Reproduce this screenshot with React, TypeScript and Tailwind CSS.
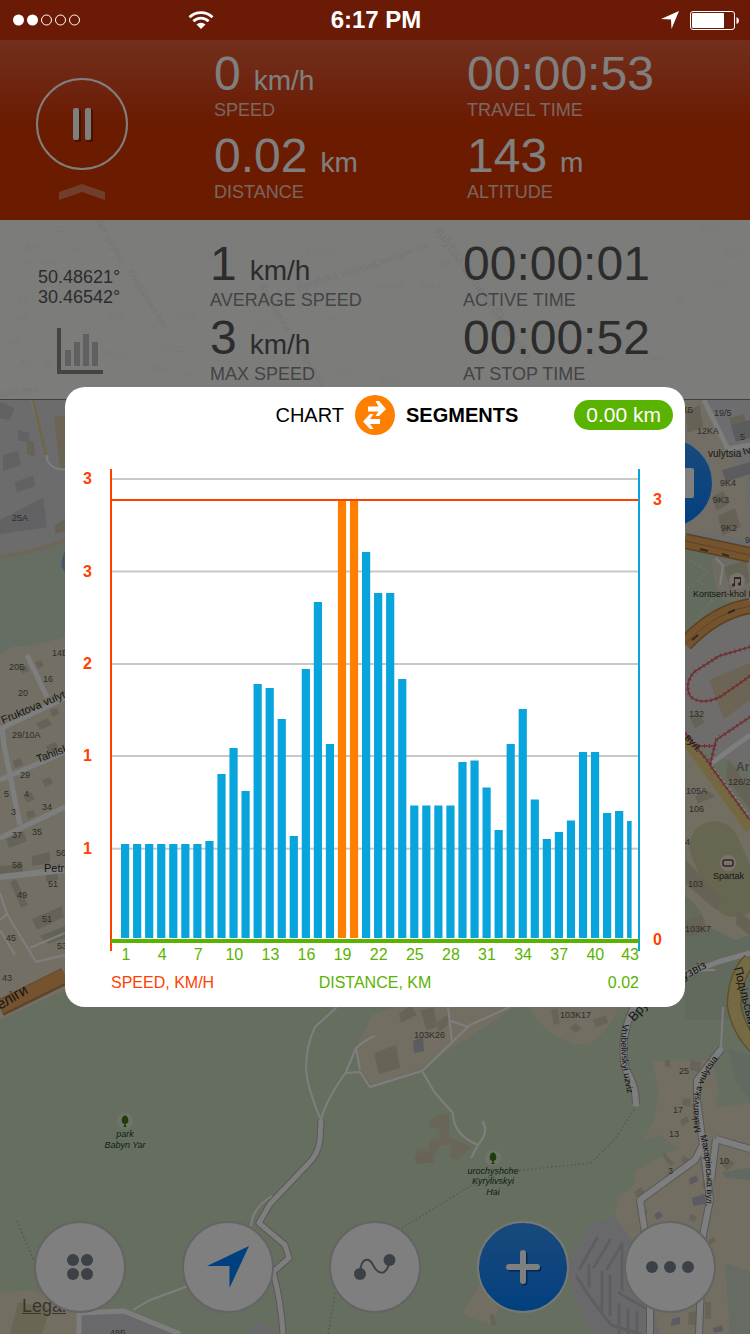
import React from "react";

type Label = [x: number, y: number, text: string, rotate?: number, size?: number];

const houseNumbers: Label[] = [
  [12, 521, "25A"], [52, 656, "14Б"], [9, 670, "20Б"], [43, 682, "16"], [18, 696, "20"],
  [12, 738, "29/10A"], [20, 778, "29"], [4, 797, "5"], [24, 797, "4"], [11, 815, "3"],
  [42, 810, "34"], [12, 838, "37"], [32, 835, "35"], [56, 856, "56"], [12, 868, "58"],
  [48, 887, "51"], [17, 898, "49"], [42, 922, "51"], [6, 941, "45"], [57, 949, "53"],
  [2, 981, "43"], [714, 416, "19/5"], [697, 434, "12KA"], [740, 440, "5"], [720, 486, "9K4"],
  [713, 503, "9K3"], [721, 531, "9K2"], [745, 543, "9"], [689, 717, "132"], [728, 785, "126/2"],
  [686, 794, "105A"], [689, 812, "106"], [685, 845, "4"], [688, 887, "103"], [685, 932, "103K7"],
  [414, 1038, "103K26"], [560, 1018, "103K17"], [679, 1074, "25"], [673, 1113, "17"],
  [669, 1137, "13"], [668, 1174, "3"], [719, 1164, "10"], [110, 1336, "48Б"], [682, 413, "КБ"],
];

const panelLabels: Label[] = [
  [55, 232, "11"], [26, 250, "8A"], [69, 252, "7A"], [24, 266, "9"], [43, 266, "8/9"],
  [18, 303, "10"], [16, 320, "9/5"], [107, 318, "32/1"], [46, 331, "7"], [8, 345, "38Г"],
  [82, 333, "32"], [20, 365, "40"], [42, 367, "38"], [103, 357, "32-31"], [163, 352, "71/13"],
  [152, 372, "69A"], [181, 377, "69"], [177, 318, "28/2"], [204, 259, "12"], [306, 255, "160/20"],
  [256, 329, "125"], [329, 322, "95"], [337, 375, "157"], [377, 288, "9K12Ф"], [420, 289, "9K1Ф"],
  [435, 267, "153"], [700, 229, "21Б"], [724, 257, "21A"], [710, 287, "15A"], [675, 304, "15"],
  [653, 321, "4"], [651, 362, "8/9"], [379, 383, "157A"],
];

const streetLabels: Label[] = [
  [3, 724, "Fruktova vulytsia", -23, 11], [38, 763, "Tahilska", -21, 11], [44, 872, "Petro", 0, 11],
  [0, 1010, "еліги", -31, 15], [708, 457, "vulytsia", 0, 10], [744, 455, "Ivana", -18, 10],
  [693, 597, "Kontsert-khol P", 0, 9], [684, 738, "вул.", 48, 11], [713, 879, "Spartak", 0, 9],
  [684, 980, "узвіз", -28, 12], [734, 968, "Подільський", 76, 12],
  [634, 1022, "Вруб", -48, 13], [95, 220, "ska vulytsia", 60, 10], [128, 272, "Бондарська вул.", 58, 9],
  [298, 291, "Syretska vulytsia", -17, 11], [258, 286, "Kyrylivska", 60, 12],
  [297, 350, "Кирилівська", 57, 10], [434, 230, "vulytsia Semena Skliarenka", 55, 13],
  [375, 267, "Сирецька вул.", -20, 9], [0, 397, "ська вул.", -8, 10],
];

const leftBuildings =
  "M0 402l14 6-4 12-10-2zM18 430l12 3-2 9-10-2zM27 438l7 5 1 14-8-3zM3 455l15-4 3 14-18 6zM15 482l18-6 2 10-18 6zM0 520l43-22 4 29-34 5-13 2zM55 525l10-6v12l-10 3zM36 723l12-5 4 7-12 5zM46 746l10-4 3 7-10 4zM13 761l7-3 3 7-8 3zM23 796l8-4 4 7-8 4zM42 780l8-3 3 6-8 4zM6 839l18-7 3 9-18 7zM32 856l18-4v11l-18 3zM0 866l23-2v9l-23 3zM10 882l6-3 12 26-7 3zM32 919l30-13 2 11-27 13zM40 936l25-10v12l-17 6zM46 873l12-3v10l-12 2zM26 812l8-2 2 6-8 3zM20 668l6-3 3 6-7 3zM35 662l6-2 3 6-6 3zM50 710l7-2 2 6-7 3z";

const rightBuildings =
  "M686 411l14-6 3 22-16 6zM729 418l15-4 6 22-15 3zM711 497l12-6 7 12-13 8zM718 516l17-8 6 19-19 9zM724 567l22-7 4 22-20 7zM695 796l12-6 8 6-17 8zM690 718l7-6 8 10-10 6zM686 860l36 38-6 12-30-26zM737 910l13 10v16l-14-12zM686 920l16-6 4 18-20 6zM728 760l22 28v22l-24-33zM689 748l8 3 2 6-8-3z";

const southBuildings =
  "M374 1053l22-8 4 23-21 6zM399 1014l12-9 6 10-16 8zM420 1010l14-3 3 20-10 3zM437 1022l12-8-2 12-9 6zM551 1010l6-2 3 15-6 2zM570 1028l6-5 6 6-7 4zM593 1020l13-5 2 8-12 4zM415 1157l16-6 3 11-18 2zM665 1060l5 0 1 8-6-2zM690 1060l12 2-3 10-9-2zM683 1098l8 1-1 8-8-2zM680 1120l7-4 2 6-7 4zM683 1155l6 4-2 6-6-4zM664 1152l10 12-4 2-8-11zM634 1192l7-5 5 7-8 5zM721 1163l6-5 8 5-8 8zM642 1208l6 3-3 5-5-3zM690 1214l7 2-2 6-6-2zM708 1240l6-3 2 5-6 3zM705 1302l6 0v17l-6 0zM689 1312l8-1v15l-9-2zM490 1315l4-1 2 11-5 1zM703 1180l7 3-3 6-5-2z";

function Labels({ items, size, className }: { items: Label[]; size: number; className?: string }) {
  return (
    <g className={className}>
      {items.map(([x, y, text, rotate = 0, own], i) => (
        <text key={i} x={x} y={y} fontSize={own ?? size} transform={`rotate(${rotate} ${x} ${y})`}>
          {text}
        </text>
      ))}
    </g>
  );
}

function Tree({ x, y }: { x: number; y: number }) {
  return (
    <g transform={`translate(${x} ${y})`}>
      <circle r="8" fill="#dfe6d6" />
      <path d="M0 -5.500c2 0 3.300 2.500 3.300 5s-1 3-2.500 3.200v2.500h1v.8h-3.600v-.8h1v-2.500C-2.300 2.500-3.300 2-3.300-.5s1.300-5 3.300-5z" fill="#3f7a14" />
    </g>
  );
}

function CityMap() {
  return (
    <svg
      className="absolute inset-0 h-full w-full"
      viewBox="0 0 750 1334"
      preserveAspectRatio="xMidYMid slice"
      fontFamily="'Liberation Sans', Arial, sans-serif"
      aria-hidden="true"
    >
      <rect width="750" height="1334" fill="#ccdcc0" />
      <path d="M0 0H750V630H0z" fill="#d9d8d8" />
      <path d="M0 220H750V400H0z" fill="#ebe4d4" />
      <path d="M0 559Q30 556 65 543V637Q45 639 35 646Q15 643 0 655z" fill="#ccdcc8" />
      <path d="M65 537Q58 552 65 558z" fill="#86b1e0" transform="translate(0 14)" />
      <path d="M0 557Q30 553 65 541" fill="none" stroke="#dccfae" strokeWidth="4" />
      <path d="M0 655Q15 643 24 647Q45 643 65 637V990L0 1020z" fill="#e6dfc8" />
      <path d="M54 417L65 415V470L60 468z" fill="#d6c6a6" />
      <path d="M685 400H712L745 470L750 540L685 530z" fill="#e4ddc8" />
      <path d="M706 400H750V465L735 460z" fill="#dad9dc" />
      <path d="M685 548L720 558Q708 575 720 590L738 602L685 640z" fill="#c5d6bc" />
      <path d="M690 560L708 572L685 590M697 580L716 595L690 630" fill="none" stroke="#e3dfb0" strokeWidth="2" strokeDasharray="3 2" />
      <path d="M712 558L750 566V605L722 600Q712 580 712 558z" fill="#dfdac6" />
      <path d="M685 645L750 606V770L685 740z" fill="#dcdad8" />
      <path d="M709 680L750 663V700L724 719z" fill="#d8c9aa" />
      <path d="M685 735L750 825V960L685 968z" fill="#e4dcc4" />
      <rect x="700" y="819" width="50" height="100" rx="25" transform="rotate(-24 725 870)" fill="#cfcda0" />
      <path d="M685 896Q700 905 706 925L735 940L750 935V1020H685z" fill="#c5d4bd" />

      <path d="M372 1015L395 1007H515L418 1070L374 1087L360 1070L356 1048z" fill="#e6dcc4" />
      <path d="M530 1007H618Q611 1030 589 1044H575Q541 1032 530 1007z" fill="#e6dcc4" />
      <path d="M652 1061L712 1060L719 1092L714 1107L750 1104V1334H625L614 1220L618 1198L634 1185L636 1170L678 1148L660 1135L644 1140L655 1118L659 1090z" fill="#e6dcc4" />
      <path d="M0 1293L28 1290L78 1305V1334H0z" fill="#e6dcc4" />
      <path d="M18 1302L50 1308L42 1334H10z" fill="#d2cfa8" />
      <path d="M480 1284L463 1314L492 1325L499 1308L510 1288z" fill="#e6dcc4" />
      <path d="M440 1115L449 1113V1137L471 1147L458 1160L450 1157L452 1145H441L430 1163L415 1161L417 1148L428 1150L431 1139L439 1140L440 1129L430 1127V1120z" fill="#d3cdaf" />
      <path d="M80 1315L124 1313L184 1334H80z" fill="#d2d2d6" />
      <path d="M252 1334V1328L262 1321L275 1334z" fill="#d2d2d6" />
      <path d="M614 1216L590 1224L568 1264L572 1292L592 1334H660L640 1250z" fill="#d3d3d8" />
      <path d="M725 1263L750 1272V1334H730z" fill="#ccd8c6" />
      <path d="M728 1048L750 1055V1100L735 1080zM722 1172L750 1168V1180L726 1178z" fill="#c5d3c3" />
      <path d={leftBuildings} fill="#cbc5b1" />
      <path d="M0 402l14 6-4 12-10-2zM18 430l12 3-2 9-10-2zM3 455l15-4 3 14-18 6zM15 482l18-6 2 10-18 6zM0 520l43-22 4 29-34 5-13 2z" fill="#c4c4c8" />
      <path d={rightBuildings} fill="#cdc5ac" />
      <path d="M722 470L750 462V474L726 482zM731 425L750 420V438L736 442z" fill="#b9b9bd" />
      <path d={southBuildings} fill="#d0c6ae" />
      <path d="M413 1041l10-4 1 14-10 2zM689 1179l8-4 1 6-8 4zM692 1198l12-4 2 10-13 2zM672 1319l8-2v7l-9 2zM654 1215l5-4 4 5-6 4zM713 1328l9-3 1 6-9 2z" fill="#b6b6c4" />

      <path
        d="M597 1238L580 1268M610 1240L594 1267M622 1244L607 1269M589 1266V1286M602 1272V1310M610 1276V1315M577 1277L589 1296L611 1325L640 1334M622 1244V1290M619 1293L645 1308M619 1305V1334M628 1310V1334M637 1313V1334"
        fill="none"
        stroke="#bdbdc0"
        strokeWidth="3"
        strokeLinecap="square"
      />

      <g fill="none" stroke="#b0b0b0" strokeLinejoin="round">
        <path d="M321 1120L320 1140Q318 1155 307 1165L270 1204L259 1223L285 1245L289 1258L273 1272Q281 1300 283 1334" strokeWidth="7" />
        <path d="M722 1048L697 1080V1100L703 1145L695 1160L640 1200L646 1240M703 1145L710 1200L703 1235L699 1334M716 1139L750 1149M716 1139L711 1180M650 1300V1334" strokeWidth="8" />
        <path d="M634 1007Q618 1040 626 1070Q636 1085 636 1104" strokeWidth="8" />
      </g>
      <g fill="none" stroke="#fdfdfd" strokeLinejoin="round">
        <path d="M321 1120L320 1140Q318 1155 307 1165L270 1204L259 1223L285 1245L289 1258L273 1272Q281 1300 283 1334" strokeWidth="5" />
        <path d="M722 1048L697 1080V1100L703 1145L695 1160L640 1200L646 1240M703 1145L710 1200L703 1235L699 1334M716 1139L750 1149M716 1139L711 1180M650 1300V1334" strokeWidth="6" />
        <path d="M634 1007Q618 1040 626 1070Q636 1085 636 1104" strokeLinecap="round" strokeWidth="6" />
        <path d="M79 1334V1313L124 1311L180 1334" strokeWidth="5" />
        <path d="M337 1007L315 1027Q306 1045 306 1070Q308 1090 321 1120Q326 1100 346 1072L356 1048Q365 1040 375 1036M346 1073L360 1072L370 1087L422 1071L470 1025L510 1007M356 1048L360 1070M448 1007L452 1042M451 1021L468 1027M422 1071L435 1093L453 1113Q453 1135 478 1145Q490 1130 482 1121M478 1145L471 1158M133 1310L150 1300L188 1286M272 1196Q252 1208 251 1226" strokeWidth="2" />
        <path d="M0 729L65 698M2 728L4 745L20 825M27 655L47 697M0 780L65 752M0 838L65 807" strokeWidth="5" />
        <path d="M0 877L65 870" strokeWidth="6" />
        <path d="M0 893L7 914L36 962L65 955M0 930L15 955M8 913L0 920M30 948L65 933M32 400L48 462Q55 471 65 469" strokeWidth="2" />
        <path d="M704 400L728 449L750 445M685 975L718 962L750 953M750 735L709 765L750 820" strokeWidth="5" />
        <path d="M716 558L723 566L720 585M723 1007L721 1048M685 971L715 970" strokeWidth="2" />
      </g>
      <path d="M33 400L46 455" stroke="#dccf93" strokeWidth="3" />
      <g fill="none">
        <path d="M0 1008L65 976" stroke="#b98a50" strokeWidth="17" />
        <path d="M0 1007L65 975" stroke="#e8a65c" strokeWidth="14" />
        <path d="M685 541L750 555M685 644Q715 612 750 606" stroke="#b9833f" strokeWidth="16" />
        <path d="M685 541L750 555M685 644Q715 612 750 606" stroke="#e8a65c" strokeWidth="13" />
        <path d="M685 541L750 555M685 644Q715 612 750 606" stroke="#b58a4b" strokeWidth="1" />
        <path d="M685 739L712 776L750 829" stroke="#e6d084" strokeWidth="10" />
        <path d="M750 960Q735 975 734 1005Q738 1030 756 1048" stroke="#b9a253" strokeWidth="15" />
        <path d="M750 960Q735 975 734 1005Q738 1030 756 1048" stroke="#ead587" strokeWidth="12" />
        <path d="M700 549l8 2m14 3l7 2M692 640l6-5m30-22l7-3" stroke="#665533" strokeWidth="2" />
        <path d="M750 647L719 656L694 672Q684 684 690 696Q700 706 720 697L750 676M750 717L716 740L710 765L750 820M685 733L711 765M694 746H716" stroke="#e05c66" strokeWidth="1.500" />
        <path d="M750 647L719 656L694 672Q684 684 690 696Q700 706 720 697L750 676M750 717L716 740L710 765L750 820M685 733L711 765M694 746H716" stroke="#e05c66" strokeWidth="4" strokeDasharray="1 4" />
        <path d="M402 1228L480 1180L505 1172L591 1163L614 1140L636 1107M17 1221L34 1261M335 1293L328 1334" stroke="#abb398" strokeWidth="1.500" strokeDasharray="1.500 2.500" />
        <path d="M0 382L80 375L130 350L240 300L400 220M80 220L180 350L230 400M200 220L260 290L350 400M420 220L560 400M0 260L90 330L200 400M620 220L720 400M520 330L750 260" stroke="#f6dfb4" strokeWidth="7" opacity="0.6" />
      </g>

      <path id="vrubel" d="M623 1024Q617 1052 630 1104" fill="none" />
      <path id="makar" d="M701 1132Q690 1088 724 1052" fill="none" />
      <path id="makar2" d="M700 1136Q710 1170 705 1222" fill="none" />
      <g fill="#282828" fontSize="9">
        <text><textPath href="#vrubel">Vrubelivskyi uzviz</textPath></text>
        <text><textPath href="#makar">Makarivska vulytsia</textPath></text>
        <text><textPath href="#makar2">Макарівська вул.</textPath></text>
      </g>
      <Labels items={houseNumbers} size={9} className="fill-[#5c5a56]" />
      <Labels items={panelLabels} size={9} className="fill-[#8a8780]" />
      <Labels items={streetLabels} size={11} className="fill-[#303030]" />
      <text x="736" y="771" fontSize="12" fontWeight="bold" fill="#8d8a84">Ar</text>

      <circle cx="737" cy="581" r="8" fill="#eee9de" />
      <g fill="#6b4a35">
        <path d="M734 577H741V579H734z" />
        <path d="M734 577H735V585H734zM740 577H741V584H740z" />
        <circle cx="733.500" cy="585" r="1.700" />
        <circle cx="739.500" cy="584" r="1.700" />
      </g>
      <circle cx="728" cy="863" r="8" fill="#eee9de" />
      <rect x="723" y="860" width="10" height="6" rx="2" fill="none" stroke="#6b4a35" strokeWidth="1.500" />

      <Tree x={125} y={1121} />
      <Tree x={493} y={1158} />
      <g fill="#23402b" fontSize="9" fontStyle="italic" textAnchor="middle">
        <text x="125" y="1137">park</text>
        <text x="125" y="1148">Babyn Yar</text>
        <text x="493" y="1174">urochyshche</text>
        <text x="493" y="1184">Kyrylivskyi</text>
        <text x="493" y="1195">Hai</text>
      </g>
    </svg>
  );
}

function StatusBar() {
  return (
    <div className="relative z-30 grid h-10 grid-cols-[1fr_auto_1fr] items-center bg-[#6b1a05] pr-[10px] pl-3 text-white">
      <div className="flex items-center justify-between pr-[117px]">
        <svg className="h-3 w-[70px]" viewBox="0 0 70 12" fill="none" stroke="white" aria-label="Signal">
          <circle cx="6.500" cy="6" r="5.500" fill="white" stroke="none" />
          <circle cx="20.500" cy="6" r="5.500" fill="white" stroke="none" />
          <circle cx="34.500" cy="6" r="5" />
          <circle cx="48.500" cy="6" r="5" />
          <circle cx="62.500" cy="6" r="5" />
        </svg>
        <svg className="h-[18px] w-[26px]" viewBox="0 0 26 18" fill="none" stroke="white" strokeWidth="2.800" aria-label="Wi-Fi">
          <path d="M1.500 6.300A16.500 16.500 0 0 1 24.500 6.300" />
          <path d="M5.400 10.300A10.800 10.800 0 0 1 20.600 10.300" />
          <path d="M13 18L8.500 13.500A6.500 6.500 0 0 1 17.500 13.500z" fill="white" stroke="none" />
        </svg>
      </div>
      <div className="text-2xl leading-10 font-bold">6:17 PM</div>
      <div className="flex items-center justify-end gap-[11px]">
        <svg className="h-[18px] w-[18px]" viewBox="0 0 18 18" fill="white" aria-label="Location">
          <path d="M18 0L0 8L10 8.500L10.500 18z" />
        </svg>
        <svg className="h-5 w-[50px]" viewBox="0 0 50 20" aria-label="Battery">
          <rect x="0.500" y="1.500" width="44" height="18" rx="2.500" fill="none" stroke="white" />
          <rect x="2" y="3" width="32" height="15" rx="1" fill="white" />
          <path d="M46.500 7Q49 8 49 10.500T46.500 14z" fill="white" />
        </svg>
      </div>
    </div>
  );
}

function Stat({ value, unit, label, labelClass }: { value: string; unit?: string; label: string; labelClass: string }) {
  return (
    <div className="flex flex-col gap-0.5 whitespace-nowrap">
      <div className="flex items-baseline gap-[13px] text-[48px] leading-[48px]">
        <span>{value}</span>
        {unit && <span className="text-[28px] leading-7">{unit}</span>}
      </div>
      <div className={`text-lg leading-5 ${labelClass}`}>{label}</div>
    </div>
  );
}

function TripHeader() {
  const label = "text-white/75";
  return (
    <header className="relative grid grid-cols-[214fr_253fr_283fr] bg-linear-to-b from-[#e45e36] to-[#d63600] to-45% pt-[10px] pb-[18px] text-white">
      <div className="flex flex-col items-start gap-3.5 pt-7 pl-9">
        <button aria-label="Pause" className="flex size-[92px] items-center justify-center rounded-full border-2 border-white">
          <svg className="h-9 w-6" viewBox="0 0 24 36">
            <path d="M7 4V33M19 4V33" transform="translate(1 2)" stroke="#8c2600" strokeWidth="6" strokeLinecap="round" />
            <rect x="3" y="2" width="6" height="32" rx="2" fill="white" />
            <rect x="15" y="2" width="6" height="32" rx="2" fill="white" />
          </svg>
        </button>
        <button aria-label="Collapse" className="flex w-[92px] justify-center">
          <svg className="h-4 w-[46px]" viewBox="0 0 46 16">
            <path d="M0 8L23 0L46 8V16L23 8L0 16z" fill="white" fillOpacity="0.35" />
          </svg>
        </button>
      </div>
      <div className="flex flex-col gap-3">
        <Stat value="0" unit="km/h" label="SPEED" labelClass={label} />
        <Stat value="0.02" unit="km" label="DISTANCE" labelClass={label} />
      </div>
      <div className="flex flex-col gap-3">
        <Stat value="00:00:53" label="TRAVEL TIME" labelClass={label} />
        <Stat value="143" unit="m" label="ALTITUDE" labelClass={label} />
      </div>
    </header>
  );
}

function DetailsPanel() {
  const label = "text-[#888888]";
  return (
    <section className="relative grid grid-cols-[210fr_253fr_287fr] border-b border-[#808080] bg-[#fafafa]/92 pt-5 pb-[15px] text-[#585858]">
      <div className="flex flex-col items-start gap-[21px] pt-[27px] pl-[38px]">
        <div className="text-lg leading-5">
          <div>50.48621°</div>
          <div>30.46542°</div>
        </div>
        <button aria-label="Show chart" className="ml-[19px]">
          <svg className="size-[46px]" viewBox="0 0 46 46">
            <path d="M0 0H4V42H46V46H0z" fill="#888888" />
            <path d="M8 22h6v16H8zM17 14h6v24h-6zM26 6h6v32h-6zM35 14h6v24h-6z" fill="#c0c0c0" />
          </svg>
        </button>
      </div>
      <div className="flex flex-col gap-1">
        <Stat value="1" unit="km/h" label="AVERAGE SPEED" labelClass={label} />
        <Stat value="3" unit="km/h" label="MAX SPEED" labelClass={label} />
      </div>
      <div className="flex flex-col gap-1">
        <Stat value="00:00:01" label="ACTIVE TIME" labelClass={label} />
        <Stat value="00:00:52" label="AT STOP TIME" labelClass={label} />
      </div>
    </section>
  );
}

function RoundButton({ label, primary, children }: { label: string; primary?: boolean; children: React.ReactNode }) {
  return (
    <button
      aria-label={label}
      className={`flex size-[92px] items-center justify-center rounded-full border-2 ${
        primary ? "border-[#eeeeee] bg-linear-to-b from-[#3094f8] to-[#0080ff]" : "border-[#c8c8c8] bg-white"
      }`}
    >
      {children}
    </button>
  );
}

function Toolbar() {
  return (
    <nav className="relative mt-auto flex justify-between px-[34px] pb-[21px]">
      <RoundButton label="Menu">
        <svg className="size-[26px]" viewBox="0 0 26 26" fill="#788290">
          <circle cx="6" cy="6" r="6" />
          <circle cx="20" cy="6" r="6" />
          <circle cx="6" cy="20" r="6" />
          <circle cx="20" cy="20" r="6" />
        </svg>
      </RoundButton>
      <RoundButton label="My location">
        <svg className="size-[42px]" viewBox="0 0 42 42" fill="#0080ff">
          <path d="M42 0L0 20H22.500V42z" />
        </svg>
      </RoundButton>
      <RoundButton label="Routes">
        <svg className="h-7 w-[42px]" viewBox="0 0 42 28" fill="none" stroke="#788290" strokeWidth="2">
          <path d="M6 20C7 4 15 4 19 12S32 26 36 7" />
          <circle cx="6" cy="21" r="6" fill="#788290" stroke="none" />
          <circle cx="35.500" cy="7" r="6" fill="#788290" stroke="none" />
        </svg>
      </RoundButton>
      <RoundButton label="Add" primary>
        <svg className="size-[38px]" viewBox="0 0 38 38" strokeLinecap="round" strokeWidth="6">
          <path d="M19 5V33M5 19H33" transform="translate(1.500 1.500)" stroke="#0055aa" />
          <path d="M19 5V33M5 19H33" stroke="white" />
        </svg>
      </RoundButton>
      <RoundButton label="More">
        <svg className="h-3 w-12" viewBox="0 0 48 12" fill="#788290">
          <circle cx="6" cy="6" r="6" />
          <circle cx="24" cy="6" r="6" />
          <circle cx="42" cy="6" r="6" />
        </svg>
      </RoundButton>
    </nav>
  );
}

/* Top edge of every segment's bar, in chart units (the base line is at 938). */
const barTops = [
  844, 844, 844, 844, 844, 844, 844, 841, 774, 748, 791, 684, 688, 719, 836, 669, 602, 744, 501, 501, 552, 593, 593,
  679, 805.5, 805.5, 805.5, 805.5, 762, 760.5, 787.5, 830, 744, 709, 799.5, 839, 832, 820.5, 752, 752, 813, 811, 821,
];
const gridLines: [number, string][] = [[479, "3"], [571.5, "3"], [664, "2"], [756, "1"], [848.7, "1"]];

function SegmentsChart() {
  return (
    <svg
      className="block w-full"
      viewBox="65 457 620 550"
      fontFamily="'Liberation Sans', Arial, sans-serif"
      fontSize="16"
      role="img"
      aria-label="Speed by distance segments"
    >
      {gridLines.map(([y, text]) => (
        <g key={y}>
          <rect x="112" y={y - 1} width="526" height="2" fill="#c8c8c8" />
          <text x="87.500" y={y + 5} textAnchor="middle" fontWeight="bold" fill="#ff4000">{text}</text>
        </g>
      ))}
      {barTops.map((top, i) => (
        <rect
          key={i}
          x={121 + i * 12.05}
          y={top}
          width={i === barTops.length - 1 ? 4.5 : 8.2}
          height={938 - top}
          fill={top === 501 ? "#ff8000" : "#07a5dc"}
        />
      ))}
      <rect x="110" y="469" width="2" height="482" fill="#ff4000" />
      <rect x="110" y="499" width="529" height="2" fill="#ff4000" />
      <rect x="638" y="469" width="2" height="482" fill="#07a5dc" />
      <rect x="111" y="939" width="528" height="4" fill="#5ab300" />
      <g fill="#5ab300" textAnchor="middle">
        {Array.from({ length: 14 }, (_, i) => (
          <text key={i} x={126 + i * 36.1} y="960">{1 + i * 3}</text>
        ))}
        <text x="639" y="960" textAnchor="end">43</text>
        <text x="375" y="988">DISTANCE, KM</text>
        <text x="639" y="988" textAnchor="end">0.02</text>
      </g>
      <g fill="#ff4000">
        <text x="111" y="988">SPEED, KM/H</text>
        <text x="653" y="505" fontWeight="bold">3</text>
        <text x="653" y="945" fontWeight="bold">0</text>
      </g>
    </svg>
  );
}

function ChartDialog() {
  return (
    <div className="absolute inset-0 z-20 flex items-center bg-black/50 px-[65px] pt-[60px]">
      <div role="dialog" aria-label="Segments chart" className="w-full rounded-[20px] bg-white text-black">
        <div className="grid grid-cols-[1fr_auto_1fr] items-center gap-[11px] px-3 pt-2 pb-[22px] text-xl leading-6">
          <button className="justify-self-end">CHART</button>
          <button aria-label="Switch view">
            <svg className="block size-10" viewBox="0 0 40 40">
              <circle cx="20" cy="20" r="20" fill="#ff8000" />
              <path
                d="M13 11.500H23.500L20.500 6H24L31 14L24 21H20.500L23.500 16.500H13zM25 24H15L18.500 19H15L8 26.500L15 34H18.500L15 29H25z"
                fill="white"
              />
            </svg>
          </button>
          <div className="flex items-center justify-between">
            <button className="font-bold">SEGMENTS</button>
            <span className="rounded-full bg-[#5ab300] px-3 py-[3px] text-[21px] text-white">0.00 km</span>
          </div>
        </div>
        <SegmentsChart />
      </div>
    </div>
  );
}

export default function App() {
  return (
    <main className="relative flex min-h-screen flex-col overflow-hidden font-['Liberation_Sans',Arial,sans-serif]">
      <CityMap />
      <StatusBar />
      <TripHeader />
      <DetailsPanel />
      <button
        aria-label="Record"
        className="relative mt-[37px] mr-9 flex size-[92px] items-center justify-center self-end rounded-full border-2 border-[#dddddd] bg-linear-to-b from-[#3094f8] to-[#0080ff]"
      >
        <svg className="h-8 w-[52px]" viewBox="0 0 52 32">
          <rect y="1" width="52" height="30" rx="2" fill="white" />
        </svg>
      </button>
      <a href="#legal" className="absolute bottom-[18px] left-[22px] text-lg leading-5 text-[#6c6c62] underline">
        Legal
      </a>
      <Toolbar />
      <ChartDialog />
    </main>
  );
}
